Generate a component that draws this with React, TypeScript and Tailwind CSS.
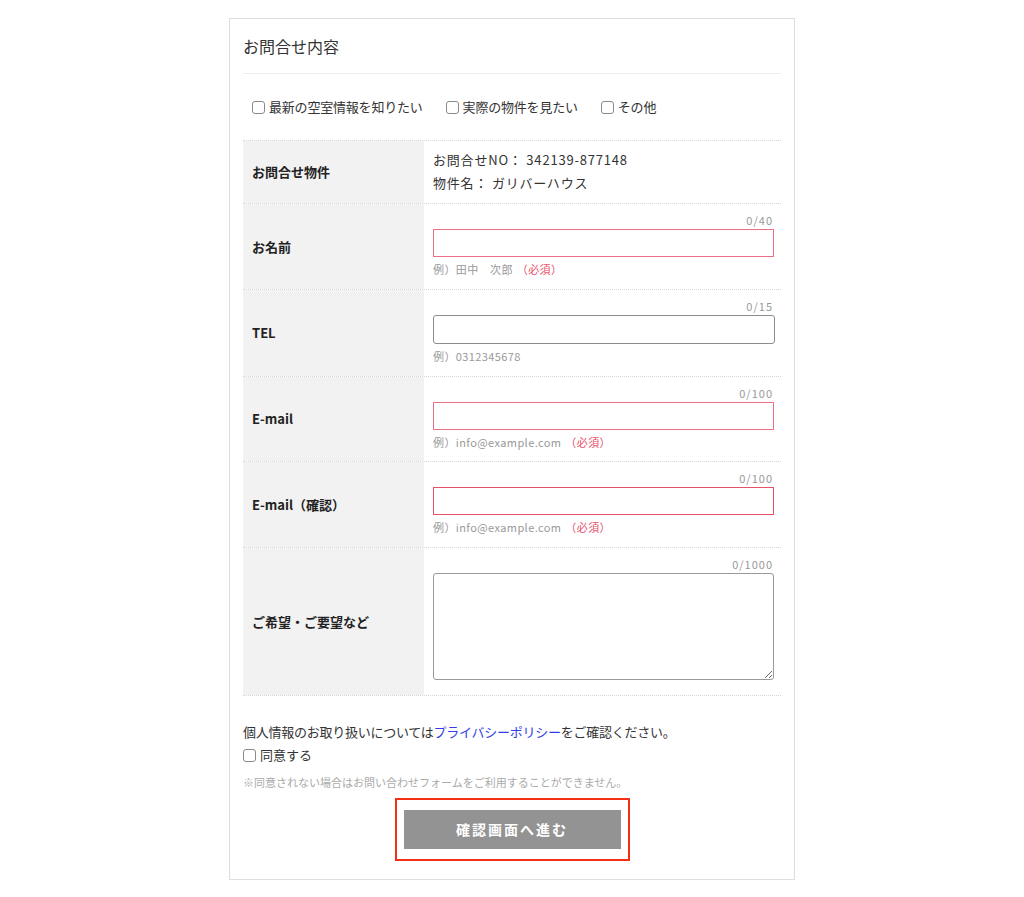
import React from "react";

const font = { fontFamily: '"Noto Sans CJK JP", "Noto Sans", sans-serif' };

function Box() {
  return (
    <span className="inline-block w-[13px] h-[13px] border border-[#8a8a8a] rounded-[3px] bg-white shrink-0" />
  );
}

function Counter({ t }: { t: string }) {
  return (
    <div className="text-right text-[11px] leading-[17px] text-[#999] tracking-[1px] pr-[1px]">{t}</div>
  );
}

function Hint({ ex, req }: { ex: string; req?: boolean }) {
  return (
    <div className="mt-[4px] text-[11px] leading-[16px] text-[#999] tracking-[0.4px]">
      {ex}
      {req && <span className="ml-[4px] text-[#e8506a]">（必須）</span>}
    </div>
  );
}

function Row({
  label,
  children,
  last,
}: {
  label: string;
  children: React.ReactNode;
  last?: boolean;
}) {
  return (
    <div className={"flex border-t border-dotted border-[#d6d6d6] " + (last ? "border-b" : "")}>
      <div className="w-[181px] shrink-0 bg-[#f2f2f2] flex items-center pl-[9px] text-[13px] font-bold text-[#222]">
        {label}
      </div>
      <div className="flex-1 pl-[9px] pr-[7px]">{children}</div>
    </div>
  );
}

export default function App() {
  return (
    <div className="w-[1024px] h-[897px] bg-white pt-[18px]" style={font}>
      <div className="mx-auto w-[566px] border border-[#dedede] px-[13px] pt-[14px] pb-[18px]">
        <div className="text-[16px] leading-[26px] text-[#333] pb-[14px] border-b border-[#eeeeee]">お問合せ内容</div>
        <div className="flex items-center h-[20px] mt-[23px] mb-[23px] pl-[9px] text-[13px] text-[#333] tracking-[-0.2px]">
          <label className="flex items-center gap-[4px]"><Box />最新の空室情報を知りたい</label>
          <label className="flex items-center gap-[4px] ml-[23px]"><Box />実際の物件を見たい</label>
          <label className="flex items-center gap-[4px] ml-[23px]"><Box />その他</label>
        </div>

        <div>
          <Row label="お問合せ物件">
            <div className="pt-[7px] pb-[9px] text-[13px] leading-[23px] text-[#333] tracking-[0.8px]">
              <div>お問合せNO：&nbsp;342139-877148</div>
              <div>物件名：&nbsp;ガリバーハウス</div>
            </div>
          </Row>
          <Row label="お名前">
            <div className="pt-[8px] pb-[12px]">
              <Counter t="0/40" />
              <div className="h-[28px] border border-[#ec7085] bg-white" />
              <Hint ex="例）田中　次郎" req />
            </div>
          </Row>
          <Row label="TEL">
            <div className="pt-[8px] pb-[12px]">
              <Counter t="0/15" />
              <div className="h-[29px] border border-[#8c8c8c] rounded-[3px] bg-white mr-[-1px]" />
              <Hint ex="例）0312345678" />
            </div>
          </Row>
          <Row label="E-mail">
            <div className="pt-[8px] pb-[11px]">
              <Counter t="0/100" />
              <div className="h-[28px] border border-[#ec7085] bg-white" />
              <Hint ex="例）info@example.com" req />
            </div>
          </Row>
          <Row label="E-mail（確認）">
            <div className="pt-[8px] pb-[12px]">
              <Counter t="0/100" />
              <div className="h-[28px] border border-[#e8506a] bg-white" />
              <Hint ex="例）info@example.com" req />
            </div>
          </Row>
          <Row label="ご希望・ご要望など" last>
            <div className="pt-[8px] pb-[15px]">
              <Counter t="0/1000" />
              <textarea className="block w-full h-[107px] border border-[#9a9a9a] rounded-[3px] bg-white resize-y outline-none" />
            </div>
          </Row>
        </div>

        <div className="mt-[27px] text-[13px] leading-[18px] text-[#333] tracking-[-0.25px]">
          個人情報のお取り扱いについては<span className="text-[#2f3ee8]">プライバシーポリシー</span>をご確認ください。
        </div>
        <label className="flex items-center gap-[4px] mt-[5px] text-[13px] leading-[18px] text-[#333]">
          <Box />同意する
        </label>
        <div className="mt-[10px] text-[11px] leading-[16px] text-[#aaa]">
          ※同意されない場合はお問い合わせフォームをご利用することができません。
        </div>
        <div className="flex justify-center mt-[8px]">
          <div className="border-2 border-[#f52e16] px-[7px] py-[10px]">
            <button className="block w-[217px] h-[39px] bg-[#939393] text-white text-[14px] font-bold tracking-[2px]">
              確認画面へ進む
            </button>
          </div>
        </div>
      </div>
    </div>
  );
}
